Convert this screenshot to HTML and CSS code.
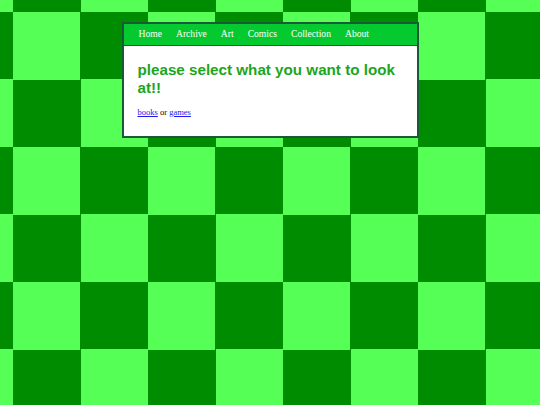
FILE: index.html
```html
<!DOCTYPE html>
<html>
<head>
<meta charset="utf-8">
<link rel="stylesheet" href="styles.css">
</head>
<body>
<div class="panel">
  <nav class="nav">
    <a href="#">Home</a>
    <a href="#">Archive</a>
    <a href="#">Art</a>
    <a href="#">Comics</a>
    <a href="#">Collection</a>
    <a href="#">About</a>
  </nav>
  <main class="content">
    <h1 class="title">please select what you want to look at!!</h1>
    <p class="choices"><a href="#">books</a> or <a href="#">games</a></p>
  </main>
</div>
</body>
</html>
```
FILE: styles.css
```css
html, body {
  margin: 0;
  padding: 0;
  height: 100%;
}
body {
  background-color: #008c00;
  background-image: conic-gradient(#008c00 25%, #55ff55 0 50%, #008c00 0 75%, #55ff55 0);
  background-size: 135px 135px;
  background-position: 13px 12px;
  padding-top: 22px;
  box-sizing: border-box;
}
.panel {
  width: 293px;
  margin: 0 auto;
  border: 2px solid #1b5a38;
  background: #ffffff;
}
.nav {
  display: flex;
  gap: 14px;
  height: 22px;
  align-items: center;
  padding: 0 0 2px 15px;
  box-sizing: border-box;
  background: #04c92f;
  border-bottom: 1px solid #1b5a38;
}
.nav a {
  color: #ffffff;
  text-decoration: none;
  font-family: "Liberation Serif", "DejaVu Serif", serif;
  font-size: 9.6px;
}
.content {
  padding: 15px 14px 19px 14px;
}
.title {
  margin: 0;
  font-family: "Liberation Sans", Arial, sans-serif;
  font-weight: bold;
  font-size: 15.2px;
  line-height: 18px;
  color: #1da51d;
}
.choices {
  margin: 10px 0 0 0;
  font-family: "Liberation Serif", serif;
  font-size: 8.5px;
  color: #000000;
}
.choices a {
  color: #1a1aee;
}
```
